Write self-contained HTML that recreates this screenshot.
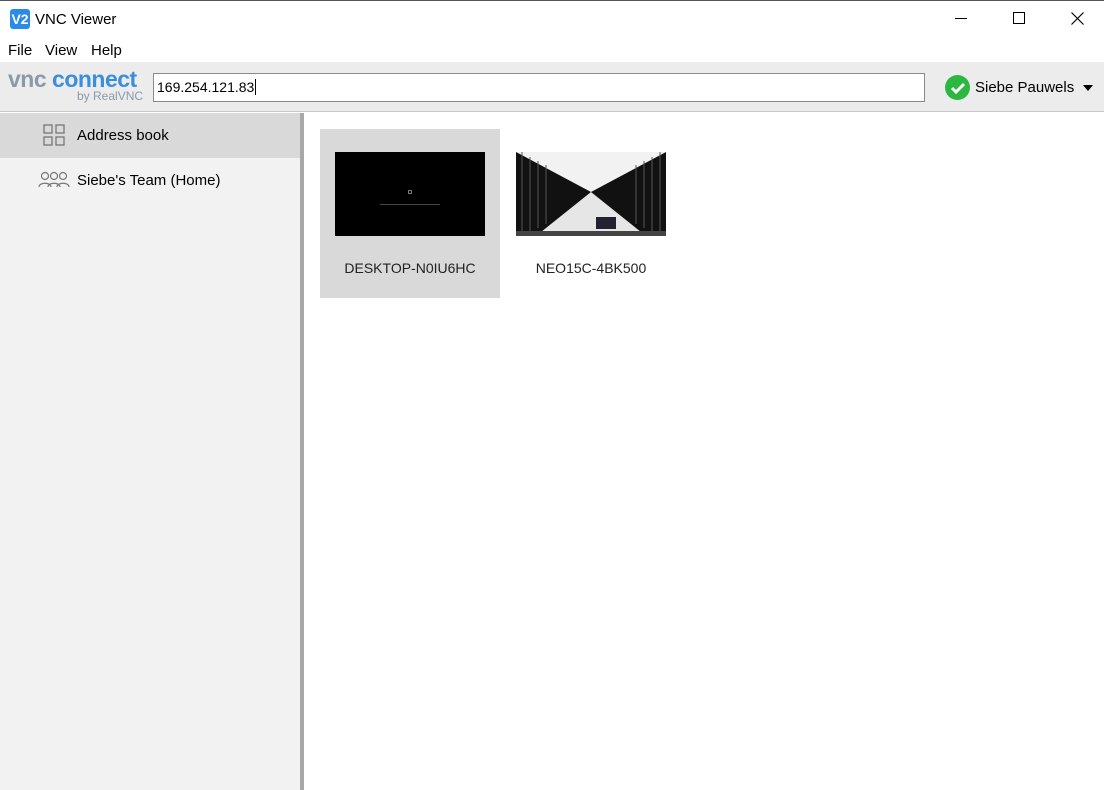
<!DOCTYPE html>
<html><head><meta charset="utf-8"><style>
*{margin:0;padding:0;box-sizing:border-box}
body{width:1104px;height:790px;overflow:hidden;background:#fff;font-family:"Segoe UI","Liberation Sans",sans-serif;color:#000;position:relative}
.abs{position:absolute}
</style></head><body>
<div class="abs" style="left:0;top:0;width:1104px;height:1px;background:#555"></div>
<div class="abs" style="left:10px;top:9px;width:20px;height:20px;background:#2b8be6;border-radius:3px;color:#fff;font-size:14px;line-height:20px;text-align:center;font-weight:bold">V2</div>
<div class="abs" style="left:35px;top:11px;font-size:15px">VNC Viewer</div>
<div class="abs" style="left:955px;top:18px;width:12px;height:1px;background:#000"></div>
<div class="abs" style="left:1013px;top:12px;width:12px;height:12px;border:1px solid #000"></div>
<svg class="abs" style="left:1071px;top:12px" width="13" height="13"><path d="M0.5 0.5L12.5 12.5M12.5 0.5L0.5 12.5" stroke="#000" stroke-width="1.2"/></svg>
<div class="abs" style="left:8px;top:42px;font-size:15px">File</div>
<div class="abs" style="left:45px;top:42px;font-size:15px">View</div>
<div class="abs" style="left:91px;top:42px;font-size:15px">Help</div>
<div class="abs" style="left:0;top:62px;width:1104px;height:50px;background:#ececec;border-bottom:1px solid #c8c8c8"></div>
<div class="abs" style="left:8px;top:65px;font-size:23px;font-weight:bold;letter-spacing:-0.5px;line-height:28px"><span style="color:#8a9aab">vnc</span> <span style="color:#3a8fdc">connect</span></div>
<div class="abs" style="left:77px;top:89px;font-size:12px;color:#8a9aab">by RealVNC</div>
<div class="abs" style="left:153px;top:73px;width:772px;height:29px;background:#fff;border:1px solid #8a8a8a;font-size:14px;padding:5px 3px">169.254.121.83<span style="border-left:1px solid #000;margin-left:1px"></span></div>
<div class="abs" style="left:945px;top:75px;width:25px;height:25px;border-radius:50%;background:#2cb742"></div>
<svg class="abs" style="left:945px;top:75px" width="25" height="25"><path d="M7 13l4 4 8-8" stroke="#fff" stroke-width="3" fill="none"/></svg>
<div class="abs" style="left:975px;top:79px;font-size:15px">Siebe Pauwels</div>
<div class="abs" style="left:1083px;top:85px;border-left:5px solid transparent;border-right:5px solid transparent;border-top:6px solid #000"></div>
<div class="abs" style="left:0;top:113px;width:300px;height:677px;background:#f2f2f2"></div>
<div class="abs" style="left:300px;top:113px;width:4px;height:677px;background:#a8a8a8"></div>
<div class="abs" style="left:0;top:113px;width:300px;height:45px;background:#d9d9d9"></div>
<svg class="abs" style="left:43px;top:124px" width="23" height="23"><g fill="none" stroke="#777" stroke-width="1.3"><rect x="1" y="1" width="8" height="8"/><rect x="13" y="1" width="8" height="8"/><rect x="1" y="13" width="8" height="8"/><rect x="13" y="13" width="8" height="8"/></g></svg>
<div class="abs" style="left:77px;top:127px;font-size:15px">Address book</div>
<svg class="abs" style="left:38px;top:171px" width="32" height="18"><g fill="none" stroke="#777" stroke-width="1.2"><circle cx="7" cy="5" r="3.5"/><circle cx="16" cy="5" r="3.5"/><circle cx="25" cy="5" r="3.5"/><path d="M1 16c0-5 12-5 12 0M10 16c0-5 12-5 12 0M19 16c0-5 12-5 12 0"/></g></svg>
<div class="abs" style="left:77px;top:172px;font-size:15px">Siebe's Team (Home)</div>
<div class="abs" style="left:320px;top:129px;width:180px;height:169px;background:#d9d9d9"></div>
<div class="abs" style="left:335px;top:152px;width:150px;height:84px;background:#000"></div>
<div class="abs" style="left:408px;top:190px;width:4px;height:4px;border:1px solid #777"></div>
<div class="abs" style="left:380px;top:204px;width:60px;height:1px;background:#444"></div>
<svg class="abs" style="left:516px;top:152px" width="150" height="84"><rect width="150" height="84" fill="#111"/><polygon points="0,0 150,0 75,40" fill="#f2f2f2"/><polygon points="20,84 130,84 75,40" fill="#e6e6e6"/><g stroke="#555" stroke-width="1"><path d="M6 0V84M14 5V80M22 9V76M30 13V72M120 13V72M128 9V76M136 5V80M144 0V84"/></g><rect x="80" y="65" width="20" height="12" fill="#223"/><rect x="0" y="79" width="150" height="5" fill="#444"/></svg>
<div class="abs" style="left:320px;top:260px;width:180px;text-align:center;font-size:14px;color:#222">DESKTOP-N0IU6HC</div>
<div class="abs" style="left:501px;top:260px;width:180px;text-align:center;font-size:14px;color:#222">NEO15C-4BK500</div>
</body></html>
